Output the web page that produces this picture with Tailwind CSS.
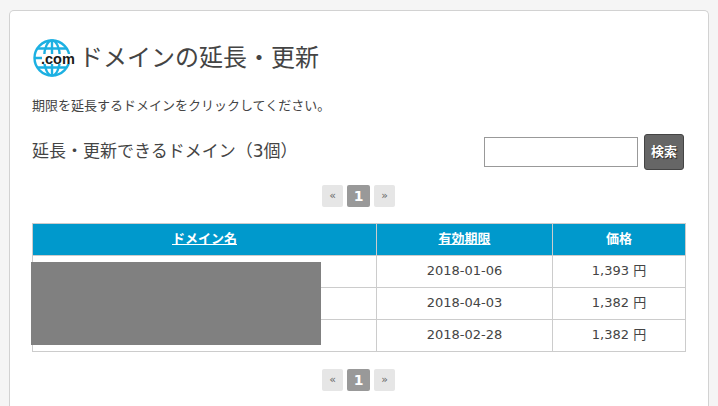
<!DOCTYPE html>
<html lang="ja">
<head>
  <meta charset="UTF-8">
  <title>ドメインの延長・更新</title>
  <script src="https://cdn.jsdelivr.net/npm/@tailwindcss/browser@4"></script>
</head>
<body class="bg-[#f5f5f5] h-[406px] overflow-hidden font-['DejaVu_Sans','Noto_Sans_CJK_JP',sans-serif] text-[#444]">

  <div class="relative ml-[9px] mr-[9px] mt-[10px] h-[396px] bg-white border border-b-0 border-[#d2d2d2] rounded-t-[5px] pt-[27px] pl-[22px] pr-[21px]">

    <div class="flex items-center h-[40px]">
      <svg class="w-[44px] h-[40px]" viewBox="0 0 44 40">
        <g fill="none" stroke="#1cb0e2" stroke-width="2.4">
          <circle cx="20" cy="20" r="17.5" />
          <ellipse cx="20" cy="20" rx="8" ry="17.5" />
          <path d="M20 2.5V37.5M5 10.5H35M2.5 20H37.5M5 29.5H35" />
        </g>
        <rect x="10" y="16" width="31" height="10" fill="#fff" />
        <text x="9" y="25.5" font-family="Liberation Sans" font-size="14.5" font-weight="700" fill="#1a1a1a">.com</text>
      </svg>
      <h1 class="ml-[3px] text-[24px] leading-[40px] text-[#444] font-normal">ドメインの延長・更新</h1>
    </div>

    <p class="mt-[18px] text-[13px] leading-[20px]">期限を延長するドメインをクリックしてください。</p>

    <div class="flex items-center justify-between mt-[18px] h-[36px]">
      <h2 class="text-[17px] font-normal">延長・更新できるドメイン（3個）</h2>
      <div class="flex items-center gap-[6px] mr-[3px]">
        <input type="text" class="w-[154px] h-[30px] border border-[#999] bg-white">
        <button class="w-[40px] h-[36px] bg-[#666] border border-[#444] rounded-[3px] text-white text-[13px] font-bold [text-shadow:1px_1px_1px_#222]">検索</button>
      </div>
    </div>

    <div class="flex justify-center gap-[4px] mt-[15px] h-[22px] pr-[2px]">
      <span class="w-[21px] h-[22px] flex items-center justify-center bg-[#e6e6e6] text-[#666] text-[11px] rounded-[2px]">«</span>
      <span class="w-[23px] h-[22px] flex items-center justify-center bg-[#999] text-white text-[14px] font-bold rounded-[2px]">1</span>
      <span class="w-[21px] h-[22px] flex items-center justify-center bg-[#e6e6e6] text-[#666] text-[11px] rounded-[2px]">»</span>
    </div>

    <table class="w-[654px] mt-[16px] border-collapse table-fixed text-[13px]">
      <thead>
        <tr class="h-[32px] bg-[#0099cc] text-white font-bold">
          <th class="w-[344px] border border-[#ccc] pb-[2px]"><a class="underline" href="#">ドメイン名</a></th>
          <th class="w-[176px] border border-[#ccc] pb-[2px]"><a class="underline" href="#">有効期限</a></th>
          <th class="border border-[#ccc] pb-[2px]">価格</th>
        </tr>
      </thead>
      <tbody class="text-center">
        <tr class="h-[32px]">
          <td class="border border-[#ccc]"></td>
          <td class="border border-[#ccc] pb-[1px]">2018-01-06</td>
          <td class="border border-[#ccc] pb-[1px]">1,393 円</td>
        </tr>
        <tr class="h-[32px]">
          <td class="border border-[#ccc]"></td>
          <td class="border border-[#ccc] pb-[1px]">2018-04-03</td>
          <td class="border border-[#ccc] pb-[1px]">1,382 円</td>
        </tr>
        <tr class="h-[32px]">
          <td class="border border-[#ccc]"></td>
          <td class="border border-[#ccc] pb-[1px]">2018-02-28</td>
          <td class="border border-[#ccc] pb-[1px]">1,382 円</td>
        </tr>
      </tbody>
    </table>

    <!-- redacted block over the first column -->
    <div class="absolute left-[21px] top-[251px] w-[290px] h-[83px] bg-[#808080]"></div>

    <div class="flex justify-center gap-[4px] mt-[17px] h-[22px] pr-[2px]">
      <span class="w-[21px] h-[22px] flex items-center justify-center bg-[#e6e6e6] text-[#666] text-[11px] rounded-[2px]">«</span>
      <span class="w-[23px] h-[22px] flex items-center justify-center bg-[#999] text-white text-[14px] font-bold rounded-[2px]">1</span>
      <span class="w-[21px] h-[22px] flex items-center justify-center bg-[#e6e6e6] text-[#666] text-[11px] rounded-[2px]">»</span>
    </div>
  </div>

</body>
</html>
